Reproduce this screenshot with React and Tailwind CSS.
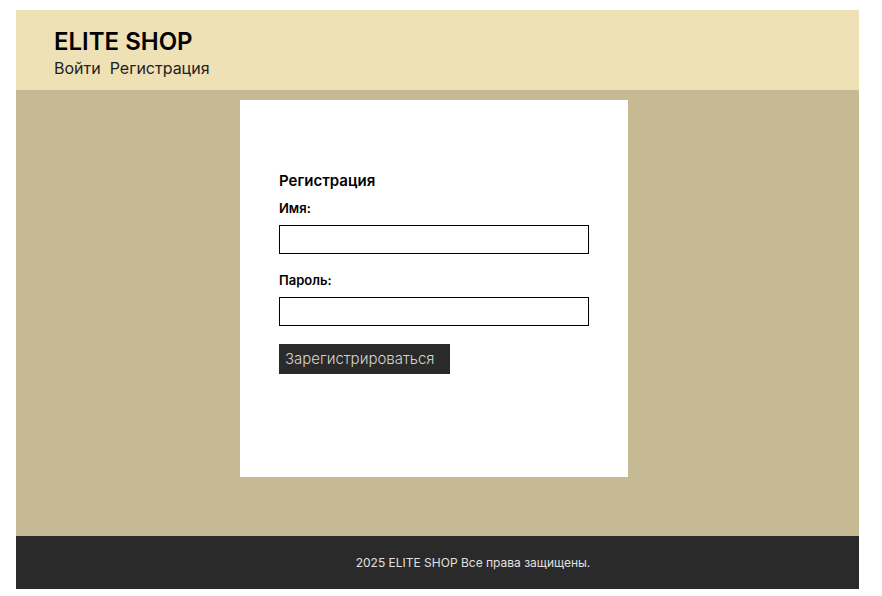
import React from 'react'

export default function App() {
  return (
    <div className="pt-[10px] pl-[16px] font-['Inter','Noto_Sans',sans-serif]">
      <div className="w-[843px]">
        {/* Header */}
        <header className="h-[80px] bg-[#efe1b6] pl-[38px] pt-[17px]">
          <h1 className="text-[24px] font-semibold leading-[30px] text-black">ELITE SHOP</h1>
          <nav className="flex gap-[9px] text-[16px] leading-[22px] text-[#222]">
            <a href="#">Войти</a>
            <a href="#">Регистрация</a>
          </nav>
        </header>

        {/* Main */}
        <main className="h-[446px] bg-[#c5ba94] pt-[10px] pl-[224px]">
          <div className="w-[388px] h-[377px] bg-white pt-[71px] px-[39px]">
            <h2 className="text-[15px] font-semibold leading-[20px] text-black">Регистрация</h2>
            <form className="mt-[8px] flex flex-col">
              <label className="text-[13px] font-semibold leading-[18px] text-black">Имя:</label>
              <input type="text" className="mt-[8px] w-[310px] h-[29px] border border-black bg-white outline-none" />
              <label className="mt-[17px] text-[13px] font-semibold leading-[18px] text-black">Пароль:</label>
              <input type="password" className="mt-[8px] w-[310px] h-[29px] border border-black bg-white outline-none" />
              <button type="button" className="mt-[18px] w-[171px] h-[30px] bg-[#2a2a2a] text-[#d4d4d4] text-[15px] font-light text-left pl-[6px]">
                Зарегистрироваться
              </button>
            </form>
          </div>
        </main>

        {/* Footer */}
        <footer className="h-[53px] bg-[#2a2a2a] flex items-center justify-center pt-[1px] pl-[71px]">
          <p className="text-[12px] text-[#e0e0e0]">2025 ELITE SHOP Все права защищены.</p>
        </footer>
      </div>
    </div>
  )
}
